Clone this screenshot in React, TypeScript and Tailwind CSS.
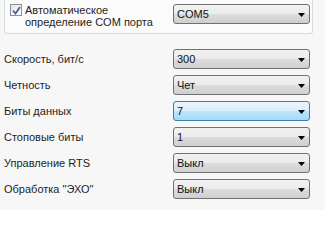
import { ReactNode } from "react";

const font = { fontFamily: '"Liberation Sans", Arial, sans-serif' };

function Combo({ value, focused = false }: { value: string; focused?: boolean }) {
  return (
    <div
      className={
        "relative w-[137px] h-[20px] rounded-[3px] border flex items-center pl-[3px] pt-[1px] text-[11px] text-[#111] " +
        (focused
          ? "border-[#3c7fb1] bg-[linear-gradient(to_bottom,#eaf6fd_0%,#d9f0fc_50%,#bee6fd_50%,#a7d9f5_100%)]"
          : "border-[#707070] bg-[linear-gradient(to_bottom,#f2f2f2_0%,#ebebeb_50%,#dddddd_50%,#cfcfcf_100%)]")
      }
    >
      <span className="leading-none">{value}</span>
      <svg className="absolute right-[4px] top-[8px]" width="7" height="4" viewBox="0 0 7 4">
        <polygon points="0,0 7,0 3.5,4" fill="#000" />
      </svg>
    </div>
  );
}

function Row({ label, children }: { label: string; children: ReactNode }) {
  return (
    <div className="h-[26px] flex items-center">
      <div className="w-[173px] pl-[4px] text-[11px] text-[#1e1e1e]">{label}</div>
      {children}
    </div>
  );
}

export default function App() {
  return (
    <div className="w-[325px] h-[210px] bg-[#f7f7f7] overflow-hidden" style={font}>
      {/* Group box (top cut off) */}
      <div className="ml-[4px] w-[309px] h-[34px] border border-t-0 border-[#d5dbe0] rounded-b-[3px] bg-[#fbfbfb] flex">
        <div className="flex items-start pl-[5px] pt-[4px] w-[168px]">
          <div className="w-[12px] h-[12px] border border-[#8e8f8f] bg-[linear-gradient(135deg,#dfe5ee,#ffffff)] flex items-center justify-center shrink-0">
            <svg width="9" height="9" viewBox="0 0 9 9">
              <path d="M1 4.5 L3.5 7.5 L8 1" stroke="#4a5f97" strokeWidth="1.8" fill="none" />
            </svg>
          </div>
          <div className="ml-[3px] text-[11px] leading-[12px] text-[#1e1e1e]">
            Автоматическое
            <br />
            определение COM порта
          </div>
        </div>
        <div className="pt-[4px]">
          <Combo value="COM5" />
        </div>
      </div>

      <div className="mt-[12px]">
        <Row label="Скорость, бит/с">
          <Combo value="300" />
        </Row>
        <Row label="Четность">
          <Combo value="Чет" />
        </Row>
        <Row label="Биты данных">
          <Combo value="7" focused />
        </Row>
        <Row label="Стоповые биты">
          <Combo value="1" />
        </Row>
        <Row label="Управление RTS">
          <Combo value="Выкл" />
        </Row>
        <Row label='Обработка "ЭХО"'>
          <Combo value="Выкл" />
        </Row>
      </div>
    </div>
  );
}
